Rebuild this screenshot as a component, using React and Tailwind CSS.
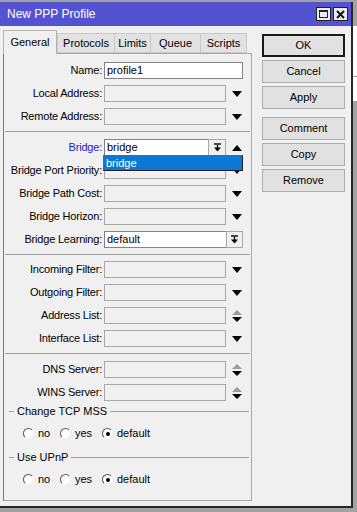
import React from 'react';

const DownArrow = () => (
  <svg width="10" height="6" viewBox="0 0 10 6"><polygon points="0,0 10,0 5,6" fill="#000" /></svg>
);

const UpArrow = () => (
  <svg width="10" height="6" viewBox="0 0 10 6"><polygon points="0,6 10,6 5,0" fill="#000" /></svg>
);

const UpDown = () => (
  <svg width="10" height="12" viewBox="0 0 10 12">
    <polygon points="0,5 10,5 5,0" fill="#9a9a9a" />
    <polygon points="0,7 10,7 5,12" fill="#000" />
  </svg>
);

const DropIcon = () => (
  <svg width="9" height="9" viewBox="0 0 9 9">
    <line x1="1" y1="1" x2="8" y2="1" stroke="#000" strokeWidth="1.4" />
    <line x1="4.5" y1="2" x2="4.5" y2="5" stroke="#000" strokeWidth="1.4" />
    <polygon points="1,4.5 8,4.5 4.5,8.5" fill="#000" />
  </svg>
);

function Row({ label, blue, children, icon }) {
  return (
    <div className="flex items-center h-[17px]">
      <div className={`w-[98px] text-right whitespace-nowrap tracking-[-0.2px] ${blue ? 'text-[#1c1cc4]' : 'text-black'}`}>{label}</div>
      <div className="ml-[2px] flex items-center">{children}</div>
      {icon && <div className="w-[21px] flex justify-center">{icon}</div>}
    </div>
  );
}

const EmptyBox = () => (
  <div className="w-[122px] h-[17px] border border-[#a8a8a8] bg-[#f0f0f0]" />
);

const Sep = () => <div className="h-px bg-[#a0a0a0] mx-[1px] my-[6px]" />;

function Radio({ checked }) {
  return (
    <div className="w-[11px] h-[11px] rounded-full bg-white border border-t-[#555] border-l-[#555] border-r-[#f0f0f0] border-b-[#f0f0f0] flex items-center justify-center">
      {checked && <div className="w-[4px] h-[4px] rounded-full bg-black" />}
    </div>
  );
}

function Group({ title, first }) {
  return (
    <div>
      <div className={`flex items-center h-[14px] ${first ? 'mt-[2px]' : 'mt-[5px]'}`}>
        <div className="w-[5px] h-px bg-[#a0a0a0] ml-[5px]" />
        <span className="px-[3px]">{title}</span>
        <div className="flex-1 h-px bg-[#a0a0a0] mr-[2px]" />
      </div>
      <div className="flex items-center h-[23px] mt-[4px] pl-[19px]">
        <Radio />
        <span className="ml-[4px] w-[22px]">no</span>
        <Radio />
        <span className="ml-[4px] w-[27px]">yes</span>
        <Radio checked />
        <span className="ml-[4px]">default</span>
      </div>
    </div>
  );
}

function Btn({ children, primary }) {
  return (
    <div className={`h-[23px] flex items-center justify-center bg-[#e1e1e1] ${primary ? 'border-2 border-[#1a1a1a]' : 'border border-[#adadad]'}`}>
      {children}
    </div>
  );
}

export default function App() {
  return (
    <div className="w-[357px] h-[512px] bg-[#a3a3a3] flex overflow-hidden text-[11px] leading-none text-black font-['Liberation_Sans',Arial,sans-serif]">
      <div className="w-[353px] h-[506px] mt-[2px] flex flex-col bg-[#f0f0f0] border-r-2 border-b-2 border-[#262626]">
        <div className="h-[24px] bg-[#5353d2] flex items-center pl-[7px] pr-[3px] text-white text-[12px]">
          <span>New PPP Profile</span>
          <div className="ml-auto flex gap-[2px]">
            <div className="w-[15px] h-[14px] bg-[#ececec] border border-[#222] flex items-center justify-center">
              <div className="w-[9px] h-[8px] border border-[#222] border-t-2" />
            </div>
            <div className="w-[15px] h-[14px] bg-[#ececec] border border-[#222] flex items-center justify-center">
              <svg width="9" height="9" viewBox="0 0 9 9">
                <line x1="1" y1="1" x2="8" y2="8" stroke="#111" strokeWidth="2" />
                <line x1="8" y1="1" x2="1" y2="8" stroke="#111" strokeWidth="2" />
              </svg>
            </div>
          </div>
        </div>

        <div className="flex flex-1">
          <div className="ml-[3px] w-[249px] flex flex-col pt-[3px]">
            <div className="flex items-end h-[24px]">
              <div className="h-[24px] w-[54px] flex items-center justify-center bg-[#f0f0f0] border border-b-0 border-[#b4b4b4] relative top-px">General</div>
              <div className="h-[20px] w-[58px] flex items-center justify-center bg-[#e2e2e2] border border-[#c8c8c8]">Protocols</div>
              <div className="h-[20px] w-[36px] flex items-center justify-center bg-[#e2e2e2] border border-l-0 border-[#c8c8c8]">Limits</div>
              <div className="h-[20px] w-[50px] flex items-center justify-center bg-[#e2e2e2] border border-l-0 border-[#c8c8c8]">Queue</div>
              <div className="h-[20px] w-[46px] flex items-center justify-center bg-[#e2e2e2] border border-l-0 border-[#c8c8c8]">Scripts</div>
            </div>
            <div className="h-[448px] border border-[#a8a8a8] border-l-[#7a7a7a] flex flex-col pt-[8px]">
              <div className="flex flex-col gap-[6px]">
                <Row label="Name:">
                  <div className="w-[139px] h-[17px] bg-white border border-[#828282] flex items-center pl-[2px]">profile1</div>
                </Row>
                <Row label="Local Address:" icon={<DownArrow />}><EmptyBox /></Row>
                <Row label="Remote Address:" icon={<DownArrow />}><EmptyBox /></Row>
              </div>
              <Sep />
              <div className="flex flex-col gap-[6px] mt-[1px]">
                <div className="relative">
                  <Row label="Bridge:" blue icon={<UpArrow />}>
                    <div className="w-[104px] h-[17px] bg-white border border-[#828282] border-r-0 flex items-center pl-[2px]">bridge</div>
                    <div className="w-[18px] h-[17px] bg-[#f0f0f0] border border-[#a8a8a8] flex items-center justify-center"><DropIcon /></div>
                  </Row>
                  <div className="absolute left-[99px] top-[16px] w-[140px] h-[16px] bg-[#0a78d4] border border-[#3b6ea0] border-r-[#222] border-b-[#222] text-white flex items-center pl-[2px] z-10">bridge</div>
                </div>
                <Row label="Bridge Port Priority:" icon={<DownArrow />}><EmptyBox /></Row>
                <Row label="Bridge Path Cost:" icon={<DownArrow />}><EmptyBox /></Row>
                <Row label="Bridge Horizon:" icon={<DownArrow />}><EmptyBox /></Row>
                <Row label="Bridge Learning:">
                  <div className="w-[122px] h-[17px] bg-white border border-[#828282] border-r-0 flex items-center pl-[2px]">default</div>
                  <div className="w-[17px] h-[17px] bg-[#f0f0f0] border border-[#a8a8a8] flex items-center justify-center"><DropIcon /></div>
                </Row>
              </div>
              <Sep />
              <div className="flex flex-col gap-[6px]">
                <Row label="Incoming Filter:" icon={<DownArrow />}><EmptyBox /></Row>
                <Row label="Outgoing Filter:" icon={<DownArrow />}><EmptyBox /></Row>
                <Row label="Address List:" icon={<UpDown />}><EmptyBox /></Row>
                <Row label="Interface List:" icon={<DownArrow />}><EmptyBox /></Row>
              </div>
              <Sep />
              <div className="flex flex-col gap-[6px] mt-[1px]">
                <Row label="DNS Server:" icon={<UpDown />}><EmptyBox /></Row>
                <Row label="WINS Server:" icon={<UpDown />}><EmptyBox /></Row>
              </div>
              <div className="mt-[1px]">
                <Group title="Change TCP MSS" first />
                <Group title="Use UPnP" />
              </div>
            </div>
          </div>

          <div className="ml-[10px] w-[83px] pt-[8px] flex flex-col">
            <div className="flex flex-col gap-[3px]">
              <Btn primary>OK</Btn>
              <Btn>Cancel</Btn>
              <Btn>Apply</Btn>
            </div>
            <div className="flex flex-col gap-[3px] mt-[8px]">
              <Btn>Comment</Btn>
              <Btn>Copy</Btn>
              <Btn>Remove</Btn>
            </div>
          </div>
        </div>
      </div>
      <div className="flex-1 flex flex-col pt-[26px]">
        <div className="h-[50px] bg-white" />
        <div className="h-px bg-[#9a9a9a]" />
        <div className="h-[24px] bg-white" />
      </div>
    </div>
  );
}
